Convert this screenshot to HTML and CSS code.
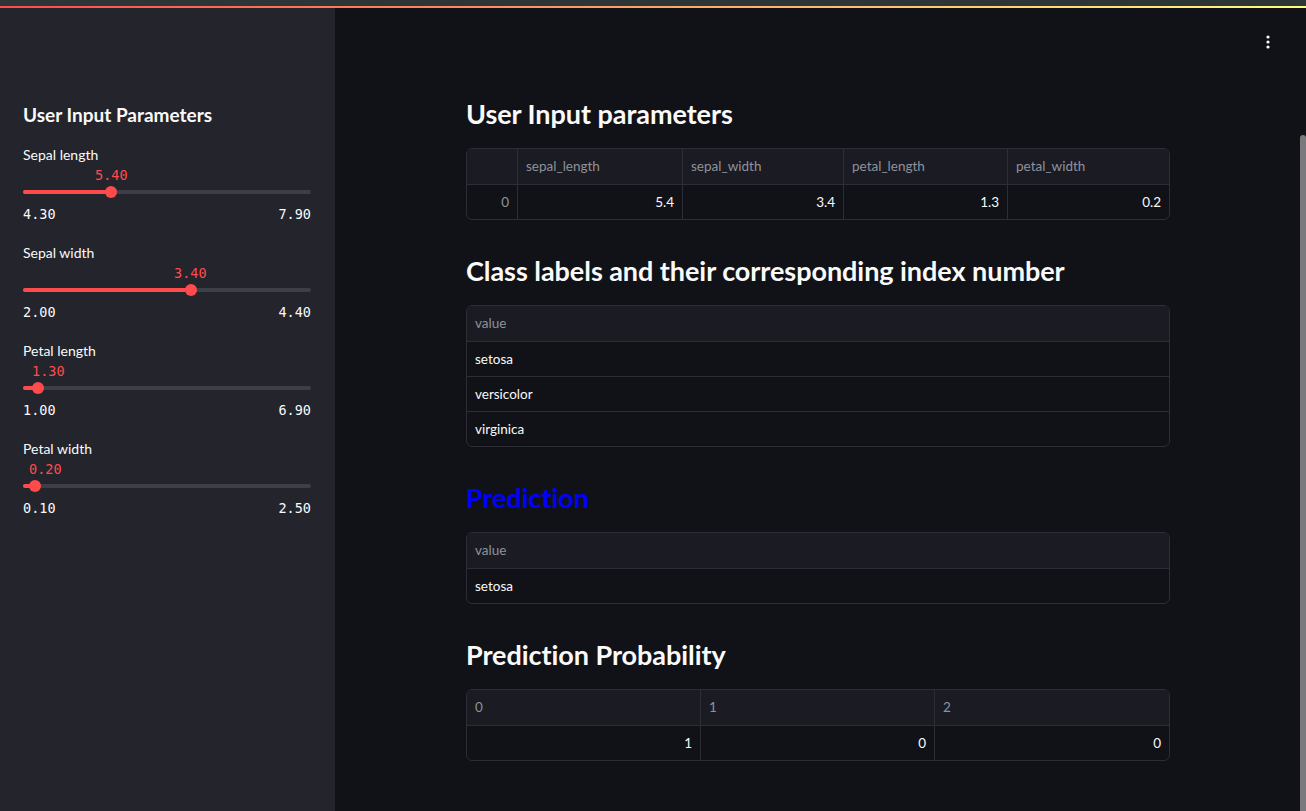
FILE: index.html
```html
<!DOCTYPE html>
<html lang="en">
<head>
<meta charset="utf-8">
<title>Iris Prediction</title>
<link rel="stylesheet" href="styles.css">
</head>
<body>
<div class="topstrip"></div>
<div class="decoration"></div>
<div class="app">
  <aside class="sidebar">
    <h2 class="side-title">User Input Parameters</h2>

    <div class="slider">
      <div class="slider-label">Sepal length</div>
      <div class="slider-value-row"><span class="slider-value" style="left:72px">5.40</span></div>
      <div class="slider-track-area">
        <div class="track"><div class="track-fill" style="width:30.56%"></div><div class="thumb" style="left:30.56%"></div></div>
      </div>
      <div class="slider-ticks"><span>4.30</span><span>7.90</span></div>
    </div>

    <div class="slider">
      <div class="slider-label">Sepal width</div>
      <div class="slider-value-row"><span class="slider-value" style="left:151px">3.40</span></div>
      <div class="slider-track-area">
        <div class="track"><div class="track-fill" style="width:58.33%"></div><div class="thumb" style="left:58.33%"></div></div>
      </div>
      <div class="slider-ticks"><span>2.00</span><span>4.40</span></div>
    </div>

    <div class="slider">
      <div class="slider-label">Petal length</div>
      <div class="slider-value-row"><span class="slider-value" style="left:9px">1.30</span></div>
      <div class="slider-track-area">
        <div class="track"><div class="track-fill" style="width:5.08%"></div><div class="thumb" style="left:5.08%"></div></div>
      </div>
      <div class="slider-ticks"><span>1.00</span><span>6.90</span></div>
    </div>

    <div class="slider">
      <div class="slider-label">Petal width</div>
      <div class="slider-value-row"><span class="slider-value" style="left:6px">0.20</span></div>
      <div class="slider-track-area">
        <div class="track"><div class="track-fill" style="width:4.17%"></div><div class="thumb" style="left:4.17%"></div></div>
      </div>
      <div class="slider-ticks"><span>0.10</span><span>2.50</span></div>
    </div>
  </aside>

  <main class="main">
    <button class="menu-btn" aria-label="Main menu">
      <svg width="4" height="14" viewBox="0 0 4 14"><circle cx="2" cy="2" r="1.6" fill="#fafafa"/><circle cx="2" cy="7" r="1.6" fill="#fafafa"/><circle cx="2" cy="12" r="1.6" fill="#fafafa"/></svg>
    </button>
    <div class="scroll-thumb"></div>

    <div class="content">
      <h3 class="heading first">User Input parameters</h3>
      <div class="table cols-params">
        <div class="cell head"></div>
        <div class="cell head">sepal_length</div>
        <div class="cell head">sepal_width</div>
        <div class="cell head">petal_length</div>
        <div class="cell head">petal_width</div>
        <div class="cell idx last">0</div>
        <div class="cell num last">5.4</div>
        <div class="cell num last">3.4</div>
        <div class="cell num last">1.3</div>
        <div class="cell num last">0.2</div>
      </div>

      <h3 class="heading">Class labels and their corresponding index number</h3>
      <div class="table cols-one">
        <div class="cell head">value</div>
        <div class="cell">setosa</div>
        <div class="cell">versicolor</div>
        <div class="cell last">virginica</div>
      </div>

      <h3 class="heading blue">Prediction</h3>
      <div class="table cols-one">
        <div class="cell head">value</div>
        <div class="cell last">setosa</div>
      </div>

      <h3 class="heading">Prediction Probability</h3>
      <div class="table cols-three">
        <div class="cell head">0</div>
        <div class="cell head">1</div>
        <div class="cell head">2</div>
        <div class="cell num last">1</div>
        <div class="cell num last">0</div>
        <div class="cell num last">0</div>
      </div>
    </div>
  </main>
</div>
</body>
</html>
```

FILE: styles.css
```css
* { box-sizing: border-box; }

html, body {
  margin: 0;
  padding: 0;
  height: 100%;
  overflow: hidden;
}

body {
  background: #111217;
  color: #fafafa;
  font-family: "Lato", "Open Sans", sans-serif;
}

.topstrip {
  height: 6px;
  background: #2e3536;
}

.decoration {
  height: 2px;
  background: linear-gradient(90deg, #ff4b4b, #fffd80);
}

.app {
  display: flex;
  height: calc(100% - 8px);
}

/* Sidebar */
.sidebar {
  width: 335px;
  flex: 0 0 335px;
  background: #23242c;
  padding: 93px 24px 0 23px;
}

.side-title {
  margin: 0 0 16px;
  font-size: 19px;
  font-weight: 700;
  line-height: 28px;
  color: #fafafa;
}

.slider {
  margin-bottom: 19px;
}

.slider-label {
  font-size: 14px;
  line-height: 20px;
  height: 20px;
  color: #fafafa;
}

.slider-value-row {
  position: relative;
  height: 21px;
}

.slider-value {
  position: absolute;
  top: 0;
  font-family: "DejaVu Sans Mono", "Liberation Mono", monospace;
  font-size: 13.5px;
  line-height: 20px;
  color: #ff4b4b;
}

.slider-track-area {
  height: 12px;
  display: flex;
  align-items: center;
}

.track {
  position: relative;
  width: 100%;
  height: 4px;
  border-radius: 2px;
  background: #3d3f48;
}

.track-fill {
  height: 4px;
  border-radius: 2px;
  background: #ff4b4b;
}

.thumb {
  position: absolute;
  top: -4px;
  width: 12px;
  height: 12px;
  margin-left: -6px;
  border-radius: 50%;
  background: #ff4b4b;
}

.slider-ticks {
  margin-top: 6px;
  display: flex;
  justify-content: space-between;
  font-family: "DejaVu Sans Mono", "Liberation Mono", monospace;
  font-size: 13.5px;
  line-height: 20px;
  color: #fafafa;
}

/* Main */
.main {
  position: relative;
  flex: 1;
  background: #111217;
}

.menu-btn {
  position: absolute;
  top: 27px;
  right: 36px;
  width: 4px;
  height: 14px;
  padding: 0;
  border: 0;
  background: none;
  display: flex;
}

.scroll-thumb {
  position: absolute;
  right: 0;
  top: 127px;
  bottom: 0;
  width: 6px;
  background: #7a7a7c;
  border-radius: 3px 3px 0 0;
}

.content {
  width: 704px;
  margin-left: 131px;
  padding-top: 91px;
}

.heading {
  margin: 36px 0 19px;
  font-size: 27px;
  font-weight: 700;
  line-height: 30px;
  color: #fafafa;
  letter-spacing: -0.05px;
}

.heading.first {
  margin-top: 0;
}

.heading.blue {
  color: #0000ff;
}

.table {
  display: grid;
  border: 1px solid #2c2d35;
  border-radius: 6px;
  overflow: hidden;
  font-size: 13.5px;
}

.cols-params { grid-template-columns: 51px 165px 161px 164px 1fr; }
.cols-one { grid-template-columns: 1fr; }
.cols-three { grid-template-columns: 1fr 1fr 1fr; }

.cell {
  height: 35px;
  line-height: 34px;
  padding: 0 8px;
  border-bottom: 1px solid #2c2d35;
  border-right: 1px solid #2c2d35;
  color: #fafafa;
  white-space: nowrap;
}

.cell:last-child,
.cols-params .cell:nth-child(5n),
.cols-three .cell:nth-child(3n),
.cols-one .cell {
  border-right: 0;
}

.cell.head {
  height: 36px;
  line-height: 35px;
  background: #1b1c23;
  color: #8f929b;
}

.cell.last {
  height: 34px;
  border-bottom: 0;
}

.cell.num { text-align: right; }
.cell.idx { text-align: right; color: #8f929b; }
```
